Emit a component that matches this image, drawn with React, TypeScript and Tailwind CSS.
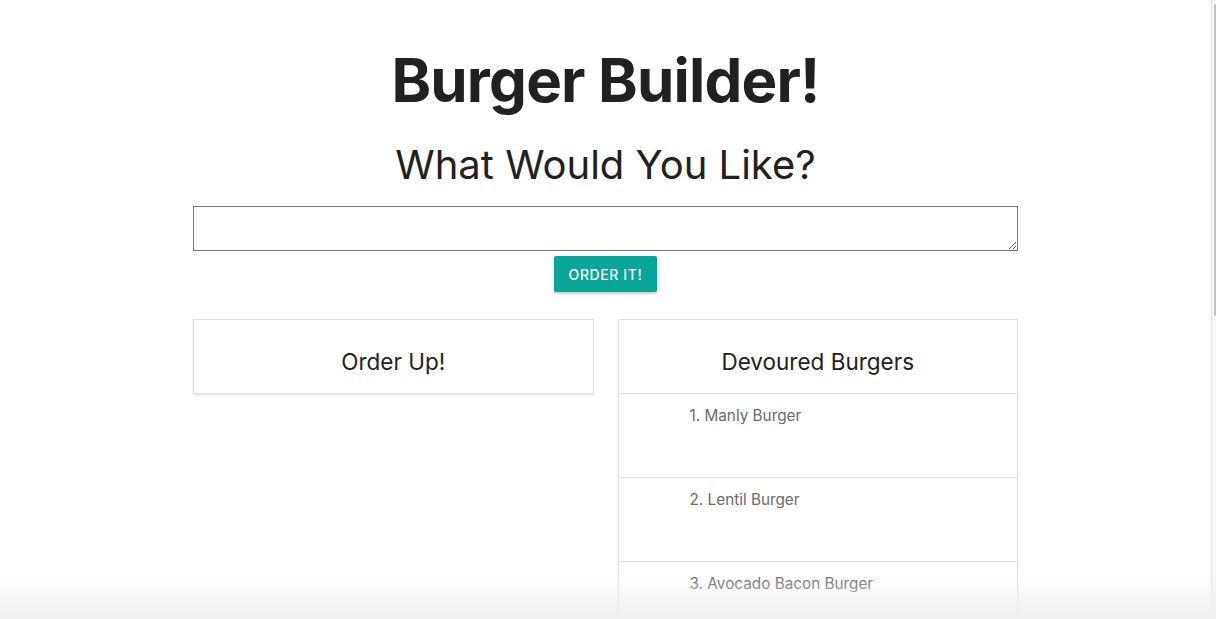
import { useState } from "react";

const devoured = ["Manly Burger", "Lentil Burger", "Avocado Bacon Burger"];

function Card({ title, children }: { title: string; children?: React.ReactNode }) {
  return (
    <div className="border border-[#e0e0e0] bg-white shadow-[0_2px_2px_rgba(0,0,0,0.08)]">
      <div className="h-[73px] flex items-center justify-center text-[22.5px] text-[#212121] pt-[10px]">
        {title}
      </div>
      {children}
    </div>
  );
}

export default function App() {
  const [order, setOrder] = useState("");

  return (
    <div className="flex min-h-[619px] bg-white font-['Inter',sans-serif] text-[#212121]">
      <main className="flex-1 flex flex-col items-center">
        <div className="w-[825px] flex flex-col items-center">
          <h1 className="mt-[40px] text-[60px] font-bold leading-[80px] tracking-[-0.8px]">
            Burger Builder!
          </h1>
          <h3 className="mt-[20px] text-[40px] leading-[50px]">
            What Would You Like?
          </h3>

          <textarea
            value={order}
            onChange={(e) => setOrder(e.target.value)}
            className="mt-[16px] w-full h-[45px] border border-[#767676] outline-none p-2 text-base"
          />

          <button className="mt-[5px] w-[103px] h-[36px] rounded-[2px] bg-[#07a698] text-white text-[14px] font-medium tracking-[0.6px] shadow-[0_2px_2px_rgba(0,0,0,0.14),0_1px_5px_rgba(0,0,0,0.12)]">
            ORDER IT!
          </button>

          <div className="mt-[27px] w-full grid grid-cols-2 gap-[24px] items-start">
            <Card title="Order Up!" />
            <Card title="Devoured Burgers">
              <ol>
                {devoured.map((b, i) => (
                  <li
                    key={b}
                    className="h-[84px] border-t border-[#e0e0e0] pl-[71px] pt-[11px] text-[15.3px] text-[#6b6b6b]"
                  >
                    {i + 1}. {b}
                  </li>
                ))}
              </ol>
            </Card>
          </div>
        </div>
      </main>

      <aside className="w-[5px] border-l border-[#e6e6e6] bg-[#f7f7f7] pt-[4px] pl-[2px]">
        <div className="h-[312px] w-[2px] bg-[#c2c2c2] rounded-full" />
      </aside>

      <div className="pointer-events-none fixed left-0 right-0 bottom-0 h-[45px] bg-gradient-to-b from-transparent to-[#efefef]" />
    </div>
  );
}
